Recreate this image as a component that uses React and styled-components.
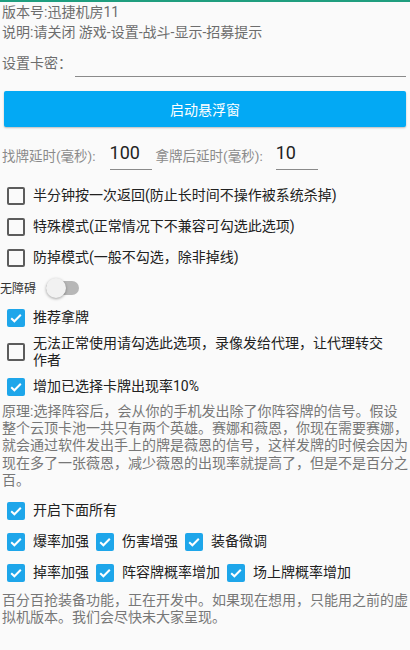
import styled, { createGlobalStyle } from "styled-components";

const GlobalStyle = createGlobalStyle`
  html, body {
    margin: 0;
    padding: 0;
    background: #fafafa;
  }
  body {
    font-family: Roboto, "Noto Sans CJK SC", sans-serif;
  }
  * { box-sizing: border-box; }
`;

const Check = ({ checked, children }) => (
  <Item>
    <Box $checked={checked}>
      {checked && (
        <svg width="14" height="14" viewBox="0 0 14 14">
          <polyline points="2.2,7.2 5.4,10.3 11.8,3.8" fill="none" stroke="#fff" strokeWidth="2" />
        </svg>
      )}
    </Box>
    <ItemText>{children}</ItemText>
  </Item>
);

const App = () => {
  return (
    <>
      <GlobalStyle />
      <Page>
        <Info>
          版本号:迅捷机房11<br />
          说明:请关闭 游戏-设置-战斗-显示-招募提示
        </Info>

        <KeyRow>
          <KeyLabel>设置卡密：</KeyLabel>
          <KeyInput />
        </KeyRow>

        <StartBtn>启动悬浮窗</StartBtn>

        <DelayRow>
          <DelayLabel>找牌延时(毫秒):</DelayLabel>
          <NumInput defaultValue="100" $ml={14} />
          <DelayLabel $ml={4}>拿牌后延时(毫秒):</DelayLabel>
          <NumInput defaultValue="10" $ml={13} />
        </DelayRow>

        <Options>
          <CheckRow><Check>半分钟按一次返回(防止长时间不操作被系统杀掉)</Check></CheckRow>
          <CheckRow><Check>特殊模式(正常情况下不兼容可勾选此选项)</Check></CheckRow>
          <CheckRow><Check>防掉模式(一般不勾选，除非掉线)</Check></CheckRow>

          <SwitchRow>
            <SwitchLabel>无障碍</SwitchLabel>
            <Track>
              <Thumb />
            </Track>
          </SwitchRow>

          <CheckRow><Check checked>推荐拿牌</Check></CheckRow>
          <CheckRow $tall><Check>无法正常使用请勾选此选项，录像发给代理，让代理转交作者</Check></CheckRow>
          <CheckRow><Check checked>增加已选择卡牌出现率10%</Check></CheckRow>
        </Options>

        <Note>
          原理:选择阵容后，会从你的手机发出除了你阵容牌的信号。假设整个云顶卡池一共只有两个英雄。赛娜和薇恩，你现在需要赛娜，就会通过软件发出手上的牌是薇恩的信号，这样发牌的时候会因为现在多了一张薇恩，减少薇恩的出现率就提高了，但是不是百分之百。
        </Note>

        <Options $mt={6}>
          <CheckRow><Check checked>开启下面所有</Check></CheckRow>
          <CheckRow>
            <Check checked>爆率加强</Check>
            <Check checked>伤害增强</Check>
            <Check checked>装备微调</Check>
          </CheckRow>
          <CheckRow>
            <Check checked>掉率加强</Check>
            <Check checked>阵容牌概率增加</Check>
            <Check checked>场上牌概率增加</Check>
          </CheckRow>
        </Options>

        <Note $mt={3} $lh={17}>
          百分百抢装备功能，正在开发中。如果现在想用，只能用之前的虚拟机版本。我们会尽快未大家呈现。
        </Note>
      </Page>
    </>
  );
};

export default App;

const Page = styled.div`
  width: 410px;
  min-height: 650px;
  border-top: 2px solid #1f9e7f;
  background: #fafafa;
`;

// 상단 안내 문구
const Info = styled.div`
  padding-left: 2px;
  font-size: 14px;
  line-height: 20px;
  color: #6d6d6d;
`;

const KeyRow = styled.div`
  display: flex;
  align-items: center;
  height: 30px;
  margin-top: 5px;
  padding: 0 4px 0 2px;
`;

const KeyLabel = styled.span`
  font-size: 14px;
  color: #6d6d6d;
  margin-right: 3px;
`;

const KeyInput = styled.input`
  flex: 1;
  height: 30px;
  border: none;
  border-bottom: 1px solid #8a8a8a;
  background: transparent;
  outline: none;
  font-size: 16px;
`;

const StartBtn = styled.button`
  display: block;
  width: 402px;
  height: 36px;
  margin: 14px 4px 0;
  border: none;
  border-radius: 2px;
  background: #03a9f4;
  color: #fff;
  font-family: Roboto, "Noto Sans CJK SC", sans-serif;
  font-size: 14px;
  box-shadow: 0 1px 2px rgba(0, 0, 0, 0.25);
`;

const DelayRow = styled.div`
  display: flex;
  align-items: center;
  height: 30px;
  margin-top: 13px;
  padding-left: 2px;
`;

const DelayLabel = styled.span`
  font-size: 13.5px;
  color: #8a8a8a;
  margin-left: ${(p) => p.$ml || 0}px;
`;

const NumInput = styled.input`
  width: 42px;
  height: 30px;
  margin-left: ${(p) => p.$ml || 0}px;
  padding: 0 0 4px 0;
  border: none;
  border-bottom: 1px solid #8a8a8a;
  background: transparent;
  outline: none;
  font-family: Roboto, sans-serif;
  font-size: 18px;
  color: #222;
`;

// 체크박스 묶음
const Options = styled.div`
  display: flex;
  flex-direction: column;
  margin-top: ${(p) => (p.$mt === undefined ? 10 : p.$mt)}px;
`;

const CheckRow = styled.div`
  display: flex;
  align-items: center;
  min-height: ${(p) => (p.$tall ? 38.5 : 31)}px;
  padding: 0 10px 0 7px;
`;

const Item = styled.label`
  display: flex;
  align-items: center;
  margin-right: 7px;
`;

const Box = styled.span`
  flex: none;
  display: flex;
  align-items: center;
  justify-content: center;
  width: 18px;
  height: 18px;
  margin-right: 8px;
  border-radius: 2px;
  border: ${(p) => (p.$checked ? "none" : "2px solid #5c5c5c")};
  background: ${(p) => (p.$checked ? "#1ea6ea" : "transparent")};
`;

const ItemText = styled.span`
  font-size: 14px;
  line-height: 17.5px;
  color: #212121;
`;

const SwitchRow = styled.div`
  display: flex;
  align-items: center;
  height: 29px;
`;

const SwitchLabel = styled.span`
  font-size: 12px;
  color: #333;
  margin-right: 10px;
`;

const Track = styled.div`
  position: relative;
  width: 33px;
  height: 14px;
  border-radius: 7px;
  background: #b7b7b7;
`;

// 스위치 손잡이
const Thumb = styled.div`
  position: absolute;
  left: 0;
  top: -3px;
  width: 20px;
  height: 20px;
  border-radius: 50%;
  background: #f1f1f1;
  box-shadow: 0 1px 3px rgba(0, 0, 0, 0.35);
`;

const Note = styled.p`
  margin: ${(p) => p.$mt || 0}px 0 0;
  padding-left: 2px;
  font-size: 14px;
  line-height: ${(p) => p.$lh || 17.4}px;
  color: #777;
`;
